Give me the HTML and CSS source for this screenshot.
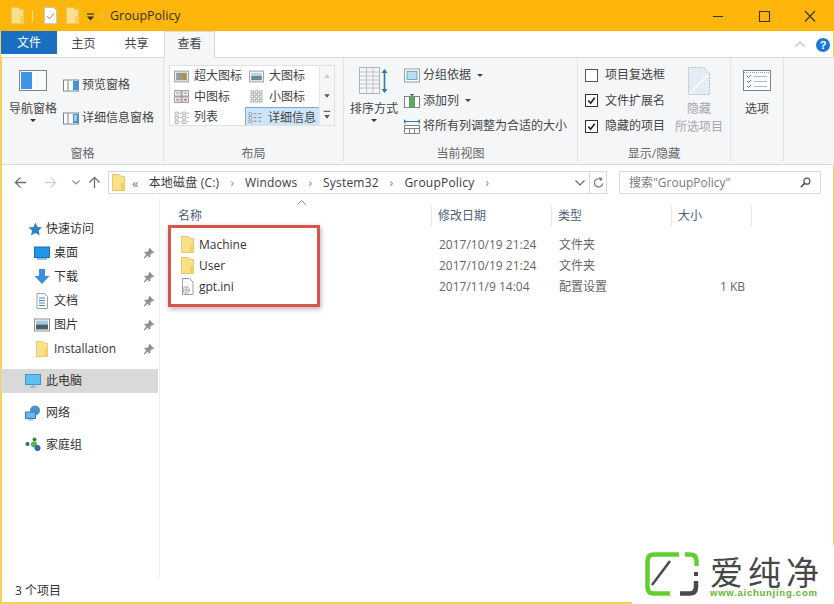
FILE: index.html
```html
<!DOCTYPE html>
<html lang="zh-CN">
<head>
<meta charset="utf-8">
<title>GroupPolicy</title>
<link rel="stylesheet" href="styles.css">
</head>
<body>
<svg class="defs" width="0" height="0">
  <symbol id="folder" viewBox="0 0 13 17">
    <path d="M.5 .5h7l1.500 2h3.500v14h-12z" fill="#fbe08a" stroke="#e8c766"/>
    <path d="M9 9h3.500v7.500H9z" fill="#f6cf60"/>
  </symbol>
  <symbol id="pin" viewBox="0 0 12 12">
    <path d="M6.500 .8l4.700 4.700-1 .8-1-.4-2 2 .2 2-.9.900-2-2L1.500 11.200l-.7-.7 2.400-3-2-2 .9-.9 2 .2 2-2-.4-1z" fill="#8d9298"/>
  </symbol>
</svg>
<div class="window">
  <header class="titlebar">
    <svg class="qa-folder"><use href="#folder"/></svg>
    <span class="qa-sep"></span>
    <svg class="qa-doc" viewBox="0 0 13 17"><path d="M.5 .5h9l3 3v13H.5z" fill="#fff" stroke="#c8c8c8"/><path d="M3 9l2.500 3L10 6" fill="none" stroke="#e0805a" stroke-width="1"/></svg>
    <svg class="qa-folder2"><use href="#folder"/></svg>
    <svg class="qa-drop" viewBox="0 0 9 8"><path d="M1 1h7" stroke="#333" stroke-width="1.200"/><path d="M1 3.500h7L4.500 7.500z" fill="#333"/></svg>
    <span class="qa-sep2"></span>
    <span class="title-text">GroupPolicy</span>
    <div class="winctl">
      <svg viewBox="0 0 46 16"><path d="M18 8.500h10" stroke="#333" stroke-width="1"/></svg>
      <svg viewBox="0 0 46 16"><path d="M18.500 3.500h10v10h-10z" fill="none" stroke="#333" stroke-width="1.100"/></svg>
      <svg viewBox="0 0 46 16"><path d="M18 3l10 10.500M28 3L18 13.500" fill="none" stroke="#333" stroke-width="1.100"/></svg>
    </div>
  </header>

  <nav class="tabs">
    <span class="tab tab-file">文件</span>
    <span class="tab">主页</span>
    <span class="tab">共享</span>
    <span class="tab tab-active">查看</span>
    <span class="tabs-fill"></span>
    <svg class="collapse" viewBox="0 0 10 6"><path d="M.5 5.500L5 1l4.500 4.500" fill="none" stroke="#b5b8bc" stroke-width="1.100"/></svg>
    <span class="help">?</span>
  </nav>

  <section class="ribbon">
    <div class="group g-pane">
      <div class="gbody">
        <div class="big big-nav">
          <svg class="bi-nav" viewBox="0 0 28 21"><rect x=".5" y=".5" width="27" height="20" fill="#fafbfc" stroke="#7f8388"/><rect x="2" y="2" width="11" height="17" fill="#3d96e3"/></svg>
          <span class="big-label">导航窗格</span>
          <i class="caret"></i>
        </div>
        <div class="pane-col">
          <div class="small"><svg class="si" viewBox="0 0 16 12"><rect x=".5" y=".5" width="15" height="11" fill="#fff" stroke="#7f8388"/><path d="M5 1v10" stroke="#7f8388"/><rect x="10" y="1.500" width="5" height="9" fill="#3d96e3"/></svg><span>预览窗格</span></div>
          <div class="small"><svg class="si" viewBox="0 0 16 12"><rect x=".5" y=".5" width="15" height="11" fill="#fff" stroke="#7f8388"/><path d="M5 1v10" stroke="#7f8388"/><rect x="10" y="1.500" width="5" height="9" fill="#3d96e3"/><path d="M11 3.500h3M11 5.500h3M11 7.500h3" stroke="#fff"/></svg><span>详细信息窗格</span></div>
        </div>
      </div>
      <div class="glabel">窗格</div>
    </div>

    <div class="group g-layout">
      <div class="gbody">
        <div class="gallery">
          <div class="gallery-grid">
            <div class="gi"><svg class="gico" viewBox="0 0 14 11"><rect x=".5" y=".5" width="13" height="10" fill="#eef1f4" stroke="#a0a4a8"/><rect x="2" y="2" width="10" height="7" fill="#8aa098"/><rect x="7" y="3" width="4" height="5" fill="#c9853c"/></svg><span>超大图标</span></div>
            <div class="gi"><svg class="gico" viewBox="0 0 14 11"><rect x=".5" y=".5" width="13" height="10" fill="#fff" stroke="#a0a4a8"/><path d="M2 2h10v3H2z" fill="#b5d6e3"/><path d="M2 5h10v4H2z" fill="#6d8793"/></svg><span>大图标</span></div>
            <div class="gi"><svg class="gico" viewBox="0 0 14 12"><path d="M.5 .5h6v5h-6zM7.500 .5h6v5h-6zM.5 6.500h6v5h-6zM7.500 6.500h6v5h-6z" fill="#f8f8f8" stroke="#a0a4a8"/><path d="M2 8h3v2H2z" fill="#d4976a"/><path d="M9 8h3v2H9z" fill="#d4786a"/><path d="M2 2h3v2H2zM9 2h3v2H9z" fill="#b5bac0"/></svg><span>中图标</span></div>
            <div class="gi"><svg class="gico" viewBox="0 0 14 14"><path d="M1 1h3v3H1zM5.500 1h3v3h-3zM10 1h3v3h-3zM1 5.500h3v3H1zM5.500 5.500h3v3h-3zM10 5.500h3v3h-3zM1 10h3v3H1zM5.500 10h3v3h-3zM10 10h3v3h-3z" fill="#fff" stroke="#8a8e92" stroke-width=".8"/></svg><span>小图标</span></div>
            <div class="gi"><svg class="gico" viewBox="0 0 14 12"><path d="M1 1h3v2.500H1zM1 5h3v2.500H1zM1 9h3v2.500H1zM8 1h3v2.500H8zM8 5h3v2.500H8zM8 9h3v2.500H8z" fill="#fff" stroke="#a0a4a8" stroke-width=".8"/><path d="M5 2h2M5 6h2M5 10h2M12 2h2M12 6h2M12 10h2" stroke="#b0b4b8"/></svg><span>列表</span></div>
            <div class="gi gi-sel"><svg class="gico" viewBox="0 0 16 12"><path d="M1 1h3v2.500H1zM1 5h3v2.500H1zM1 9h3v2.500H1z" fill="#fff" stroke="#7d8893" stroke-width=".8"/><path d="M6 2h3M6 6h3M6 10h3M11 2h3M11 6h3M11 10h3" stroke="#7d8893"/></svg><span>详细信息</span></div>
          </div>
          <div class="gallery-scroll">
            <svg viewBox="0 0 15 20"><path d="M4.500 12L7.500 8l3 4z" fill="#c5c8cc"/></svg>
            <svg viewBox="0 0 15 20"><path d="M4.500 8l3 4 3-4z" fill="#555"/></svg>
            <svg viewBox="0 0 15 20"><path d="M4 5h7" stroke="#555" stroke-width="1.200"/><path d="M4.500 9l3 4 3-4z" fill="#555"/></svg>
          </div>
        </div>
      </div>
      <div class="glabel">布局</div>
    </div>

    <div class="group g-view">
      <div class="gbody">
        <div class="big big-sort">
          <svg class="bi-sort" viewBox="0 0 30 28"><rect x=".5" y=".5" width="20" height="26" fill="#f3f5f7" stroke="#aeb3b8"/><path d="M1 5h19M1 9h19M1 13h19M1 17h19M1 21h19M7.500 1v25M14 1v25" stroke="#bcc1c6"/><path d="M25.500 3v22" stroke="#2d7db3" stroke-width="1.600"/><path d="M22.500 6l3-4 3 4zM22.500 22l3 4 3-4z" fill="#2d7db3"/></svg>
          <span class="big-label">排序方式</span>
          <i class="caret"></i>
        </div>
        <div class="view-col">
          <div class="small"><svg class="si" viewBox="0 0 16 14"><rect x=".5" y=".5" width="15" height="13" fill="#f8fafc" stroke="#9aa0a6"/><rect x="3" y="3" width="10" height="8" fill="#b8dcf5" stroke="#6fa8d0"/></svg><span>分组依据</span><i class="mini-caret"></i></div>
          <div class="small"><svg class="si" viewBox="0 0 16 15"><rect x=".5" y="3.500" width="15" height="11" fill="#fff" stroke="#7f8388"/><path d="M5.500 4v10M10.500 4v10" stroke="#7f8388"/><rect x="6" y="4" width="4" height="10" fill="#4cb848"/><path d="M5.500 1h5L8 3.500z" fill="#2d7db3"/></svg><span>添加列</span><i class="mini-caret"></i></div>
          <div class="small"><svg class="si" viewBox="0 0 16 15"><path d="M.5 .5v4M15.500 .5v4M2 2.500h12" stroke="#2d7db3" fill="none"/><path d="M2 .8v3.400L.8 2.500zM14 .8v3.400l1.200-1.700z" fill="#2d7db3"/><path d="M.5 6.500h15v8H.5zM.5 9.500h15M5.500 9.500v5M10.500 9.500v5" fill="#fff" stroke="#7f8388"/></svg><span>将所有列调整为合适的大小</span></div>
        </div>
      </div>
      <div class="glabel">当前视图</div>
    </div>

    <div class="group g-show">
      <div class="gbody">
        <div class="checks">
          <label class="chk"><i class="box"></i><span>项目复选框</span></label>
          <label class="chk"><i class="box on"><svg viewBox="0 0 12 12"><path d="M2.500 6l2.500 3 4.500-6" fill="none" stroke="#222" stroke-width="1.800"/></svg></i><span>文件扩展名</span></label>
          <label class="chk"><i class="box on"><svg viewBox="0 0 12 12"><path d="M2.500 6l2.500 3 4.500-6" fill="none" stroke="#222" stroke-width="1.800"/></svg></i><span>隐藏的项目</span></label>
        </div>
        <div class="big big-hide">
          <svg class="bi-hide" viewBox="0 0 22 28"><path d="M.5 .5h15l6 6v21H.5z" fill="#e4edf6"/><path d="M.5 27.500V.5h15l6 6v21h-21" fill="none" stroke="#b7c0ca" stroke-dasharray="2 1"/><path d="M1 27L21 7" stroke="#fff" stroke-width="1.500"/></svg>
          <span class="hide-l1">隐藏</span>
          <span class="hide-l2">所选项目</span>
        </div>
      </div>
      <div class="glabel">显示/隐藏</div>
    </div>

    <div class="group g-opt">
      <div class="gbody">
        <div class="big big-opt">
          <svg class="bi-opt" viewBox="0 0 28 21"><rect x=".5" y=".5" width="27" height="20" fill="#fbfcfd" stroke="#7f8388"/><path d="M1 2.500h26" stroke="#9aa0a6" stroke-dasharray="1 1"/><path d="M4 6l1.500 1.500L8 5M4 11l1.500 1.500L8 10M4 16l1.500 1.500L8 15" fill="none" stroke="#3f7fb5"/><path d="M11 6.500h13M11 11.500h13M11 16.500h13" stroke="#b5babf"/></svg>
          <span class="big-label">选项</span>
        </div>
      </div>
      <div class="glabel">&nbsp;</div>
    </div>
  </section>

  <div class="addressrow">
    <svg class="nav-ico back" viewBox="0 0 14 14"><path d="M13 7H2M7 1.500L1.500 7 7 12.500" fill="none" stroke="#6b6f73" stroke-width="1.400"/></svg>
    <svg class="nav-ico fwd" viewBox="0 0 14 14"><path d="M1 7h11M7 1.500L12.500 7 7 12.500" fill="none" stroke="#d0d2d4" stroke-width="1.400"/></svg>
    <svg class="nav-ico down" viewBox="0 0 8 5"><path d="M.5 .5L4 4 7.500 .5" fill="none" stroke="#8a8d90" stroke-width="1.100"/></svg>
    <svg class="nav-ico up" viewBox="0 0 14 14"><path d="M7 13V2M1.500 7L7 1.500 12.500 7" fill="none" stroke="#6b6f73" stroke-width="1.400"/></svg>
    <div class="address">
      <svg class="addr-folder"><use href="#folder"/></svg>
      <span class="crumb crumb-more">«</span>
      <span class="crumb">本地磁盘 (C:)</span><span class="sep">›</span>
      <span class="crumb">Windows</span><span class="sep">›</span>
      <span class="crumb">System32</span><span class="sep">›</span>
      <span class="crumb">GroupPolicy</span><span class="sep">›</span>
      <span class="addr-fill"></span>
      <svg class="addr-chev" viewBox="0 0 10 6"><path d="M.5 .5L5 5 9.500 .5" fill="none" stroke="#666" stroke-width="1.200"/></svg>
      <span class="addr-refresh"><svg viewBox="0 0 12 13"><path d="M9.500 4A4.500 4.500 0 1 0 10.500 7.500" fill="none" stroke="#777" stroke-width="1.300"/><path d="M6.500 .5l4 1.500-2.500 3z" fill="#777"/></svg></span>
    </div>
    <div class="search">
      <span>搜索"GroupPolicy"</span>
      <svg viewBox="0 0 12 12"><circle cx="7.500" cy="4.500" r="3.300" fill="none" stroke="#555" stroke-width="1.300"/><path d="M5 7L1 11" stroke="#555" stroke-width="1.800"/></svg>
    </div>
  </div>

  <main class="content">
    <aside class="sidebar">
      <div class="side-item si-head"><svg class="sico" viewBox="0 0 16 16"><path d="M8.500 1.500l2 4.500 4.500.5-3.300 3 1 5-4.200-2.500L4 14.500l1-5-3.500-3L6.500 6z" fill="#2e82c9"/></svg><span>快速访问</span></div>
      <div class="side-item sub"><svg class="sico" viewBox="0 0 16 13"><rect x=".5" y=".5" width="15" height="10.500" fill="#2196e8" stroke="#1a6eb5"/><path d="M3 12.500h10" stroke="#3a7cb5"/></svg><span>桌面</span><svg class="pin"><use href="#pin"/></svg></div>
      <div class="side-item sub"><svg class="sico" viewBox="0 0 16 16"><path d="M5 0h6v7h4.500L8 15 .5 7H5z" fill="#3a8de0"/></svg><span>下载</span><svg class="pin"><use href="#pin"/></svg></div>
      <div class="side-item sub"><svg class="sico" viewBox="0 0 16 16"><path d="M3 .5h7.500l3 3v12H3z" fill="#fff" stroke="#9aa0a6"/><path d="M5 5h6M5 7.500h6M5 10h6M5 12.500h6" stroke="#3f8fb5"/></svg><span>文档</span><svg class="pin"><use href="#pin"/></svg></div>
      <div class="side-item sub"><svg class="sico" viewBox="0 0 16 13"><rect x=".5" y=".5" width="15" height="12" fill="#fff" stroke="#8a8e92"/><path d="M2 2h12v4H2z" fill="#a5c9da"/><path d="M2 6h12v5H2z" fill="#48606c"/></svg><span>图片</span><svg class="pin"><use href="#pin"/></svg></div>
      <div class="side-item sub"><svg class="sico" viewBox="0 0 13 17"><use href="#folder"/></svg><span>Installation</span><svg class="pin"><use href="#pin"/></svg></div>
      <div class="side-item head-gap selected"><svg class="sico" viewBox="0 0 16 14"><rect x=".5" y=".5" width="15" height="10" fill="#5cc0f5" stroke="#4a8fbf"/><path d="M5 13h6M8 11v2" stroke="#7ba3bf"/></svg><span>此电脑</span></div>
      <div class="side-item head-gap"><svg class="sico" viewBox="0 0 16 16"><circle cx="10" cy="5.500" r="5" fill="#4a92c8"/><rect x=".5" y="7" width="10" height="6.500" fill="#6db6ea" stroke="#3a7cb5"/><path d="M3 15h5" stroke="#7ba3bf"/></svg><span>网络</span></div>
      <div class="side-item head-gap"><svg class="sico" viewBox="0 0 16 16"><circle cx="2.500" cy="7" r="2" fill="#35619e"/><circle cx="9.500" cy="2.500" r="2" fill="#3f7c3a"/><circle cx="9" cy="7.500" r="3" fill="#4cb848"/><circle cx="12.500" cy="11" r="3" fill="#2f6aa8"/></svg><span>家庭组</span></div>
    </aside>
    <section class="files">
      <svg class="sort-caret" viewBox="0 0 9 5"><path d="M.5 4.500L4.500 .5l4 4" fill="none" stroke="#8a8d90"/></svg>
      <div class="fhead">
        <span class="c-name">名称</span>
        <span class="c-date">修改日期</span>
        <span class="c-type">类型</span>
        <span class="c-size">大小</span>
      </div>
      <div class="frow"><span class="c-name fn"><svg class="fi"><use href="#folder"/></svg>Machine</span><span class="c-date">2017/10/19 21:24</span><span class="c-type">文件夹</span><span class="c-size"></span></div>
      <div class="frow"><span class="c-name fn"><svg class="fi"><use href="#folder"/></svg>User</span><span class="c-date">2017/10/19 21:24</span><span class="c-type">文件夹</span><span class="c-size"></span></div>
      <div class="frow"><span class="c-name fn"><svg class="fi" viewBox="0 0 13 17"><path d="M1.500 .5h7l3.500 3.500v12.500H1.500z" fill="#fff" stroke="#9a9ea2"/><circle cx="5" cy="12" r="3.200" fill="#e8e8e8" stroke="#77797c" stroke-dasharray="1.500 .8"/><circle cx="5" cy="12" r="1" fill="#fff" stroke="#77797c" stroke-width=".6"/></svg>gpt.ini</span><span class="c-date">2017/11/9 14:04</span><span class="c-type">配置设置</span><span class="c-size">1 KB</span></div>
      <div class="highlight"></div>
    </section>
  </main>
  <footer class="status">3 个项目</footer>

  <div class="watermark">
    <svg class="wm-logo" viewBox="0 0 54 44">
      <path d="M34 2.500H9Q2.500 2.500 2.500 9v26q0 6.500 6.500 6.500h16" fill="none" stroke="#62cf2e" stroke-width="4.500"/>
      <path d="M40 2.500h5q6.500 0 6.500 6.500v5" fill="none" stroke="#62cf2e" stroke-width="4.500"/>
      <path d="M7 33L25 9" stroke="#4a4a4a" stroke-width="2.500"/>
      <path d="M51 20v4" stroke="#4a4a4a" stroke-width="4"/>
      <path d="M51 29v6q0 6.500-6.500 6.500H35" fill="none" stroke="#4a4a4a" stroke-width="4.500"/>
    </svg>
    <div class="wm-text">
      <span class="wm-cn">爱纯净</span>
      <span class="wm-url">www.aichunjing.com</span>
    </div>
  </div>
</div>
</body>
</html>
```

FILE: styles.css
```css
* { box-sizing: border-box; }
html, body { margin: 0; padding: 0; }
body {
  width: 834px; height: 604px; overflow: hidden; background: #fff;
  font: 12px/16px "Open Sans", "Noto Sans CJK SC", sans-serif;
  color: #3c3c3c;
}
.defs { position: absolute; }
svg { display: block; flex: none; }
.window {
  position: relative; width: 834px; height: 604px; display: flex; flex-direction: column;
  border: solid #f6d155; border-width: 0 1px 2px 2px; background: #fff;
}

/* title bar */
.titlebar {
  height: 31px; margin: 0 -1px 0 -2px; padding-left: 11px; background: #ffb60b;
  display: flex; align-items: center; flex: none;
}
.qa-folder, .qa-folder2 { width: 13px; height: 17px; }
.qa-sep { width: 1px; height: 12px; background: #e8d9a5; margin: 0 11px 0 8px; }
.qa-doc { width: 13px; height: 17px; margin-right: 9px; }
.qa-drop { width: 9px; height: 8px; margin: 2px 0 0 7px; }
.qa-sep2 { width: 1px; height: 12px; background: #d9c586; margin: 0 7px 0 7px; }
.title-text { font-size: 12.500px; color: #333; }
.winctl { margin-left: auto; display: flex; padding-right: 1px; }
.winctl svg { width: 46px; height: 16px; }

/* tabs */
.tabs {
  height: 26px; flex: none; display: flex; align-items: flex-start; background: #fff;
  margin-left: -1px; padding-right: 3px;
}
.tab { width: 53px; height: 23px; line-height: 25px; text-align: center; color: #444; }
.tab-file { width: 56px; background: #1a6fc2; color: #fff; line-height: 24px; }
.tab-active { width: 51px; height: 27px; margin-left: 1px; border: 1px solid #dadbdc; border-bottom: 0; background: #f5f6f7; line-height: 24px; position: relative; z-index: 1; }
.tabs-fill { flex: 1; }
.collapse { width: 10px; height: 6px; margin: 10px 11px 0 0; }
.help {
  width: 14px; height: 14px; margin-top: 7px; border-radius: 50%; background: #1b78d0; color: #fff;
  font: bold 11px/14px "Liberation Sans", sans-serif; text-align: center;
}

/* ribbon */
.ribbon {
  height: 108px; flex: none; display: flex; background: #f5f6f8;
  border-top: 1px solid #dadbdc; border-bottom: 1px solid #dadbdc; margin-right: -1px;
}
.group { display: flex; flex-direction: column; border-right: 1px solid #e2e3e5; margin-bottom: 3px; color: #444; }
.gbody { flex: 1; display: flex; min-height: 0; }
.glabel { height: 18px; text-align: center; color: #666; line-height: 18px; padding-top: 2px; }
.g-pane { width: 162px; }
.g-layout { width: 180px; }
.g-view { width: 234px; }
.g-show { width: 153px; }
.g-opt { width: 53px; }

.big { display: flex; flex-direction: column; align-items: center; }
.big-label { margin-top: 10px; white-space: nowrap; }
.caret { width: 0; height: 0; border: 3px solid transparent; border-top-color: #333; border-bottom: 0; margin-top: 2px; }
.mini-caret { width: 0; height: 0; border: 3px solid transparent; border-top-color: #444; border-bottom: 0; margin-left: 6px; }
.big-nav { width: 48px; margin: 12px 0 0 7px; }
.bi-nav { width: 28px; height: 21px; }
.pane-col { margin: 19px 0 0 6px; display: flex; flex-direction: column; gap: 17px; }
.small { display: flex; align-items: center; height: 16px; white-space: nowrap; }
.si { width: 16px; height: 13px; margin-right: 3px; }

.gallery { margin: 7px 0 0 5px; width: 166px; height: 61px; display: flex; background: #fff; border: 1px solid #dfe1e4; }
.gallery-grid { flex: 1; display: grid; grid-template-columns: 75px 75px; grid-template-rows: 20px 21px 20px; overflow: hidden; }
.gi { display: flex; align-items: center; white-space: nowrap; padding-left: 4px; }
.gi span { margin-left: 5px; }
.gico { width: 15px; height: 13px; }
.gi-sel { background: #cde5f8; border: 1px solid #82a9d2; border-bottom: 0; padding-left: 2px; }
.gallery-scroll { width: 15px; background: #f5f6f8; border-left: 1px solid #e5e6e8; display: flex; flex-direction: column; }
.gallery-scroll svg { width: 14px; height: 20px; }

.big-sort { width: 48px; margin: 9px 0 0 6px; }
.bi-sort { width: 30px; height: 28px; }
.big-sort .big-label { margin-top: 6px; }
.view-col { margin: 9px 0 0 6px; display: flex; flex-direction: column; gap: 9.500px; }
.view-col .si { height: 15px; }
.checks { margin: 9px 0 0 7px; display: flex; flex-direction: column; gap: 9.500px; }
.chk { display: flex; align-items: center; height: 16px; white-space: nowrap; }
.box { width: 13px; height: 13px; border: 1px solid #555; background: #fff; margin-right: 7px; flex: none; }
.box svg { width: 11px; height: 11px; }
.box.on { border-color: #333; }
.big-hide { width: 48px; margin: 9px 0 0 10px; color: #a4a7ab; }
.bi-hide { width: 22px; height: 28px; }
.hide-l1 { margin-top: 6px; }
.hide-l2 { margin-top: 2px; white-space: nowrap; }
.big-opt { width: 52px; margin-top: 12px; }
.bi-opt { width: 28px; height: 21px; }

/* address row */
.addressrow { height: 33px; flex: none; display: flex; align-items: center; margin-top: 1px; }
.nav-ico { width: 13px; height: 13px; }
.back { margin-left: 12px; }
.fwd { margin-left: 17px; }
.down { width: 8px; height: 5px; margin-left: 15px; }
.up { margin-left: 8px; }
.address {
  margin-left: 7px; width: 499px; height: 23px; border: 1px solid #d9d9d9; display: flex; align-items: center;
  color: #3c3c3c;
}
.addr-folder { width: 13px; height: 17px; margin-left: 3px; }
.crumb { white-space: nowrap; letter-spacing: .2px; }
.crumb-more { margin: 0 10px 0 7px; color: #777; font-size: 13px; }
.sep { margin: 0 11px; color: #888; }
.addr-fill { flex: 1; }
.addr-chev { width: 10px; height: 6px; margin-right: 4px; }
.addr-refresh { width: 17px; height: 21px; border-left: 1px solid #d9d9d9; display: flex; align-items: center; justify-content: center; }
.addr-refresh svg { width: 11px; height: 13px; }
.search {
  margin-left: 12px; width: 202px; height: 23px; border: 1px solid #d9d9d9; display: flex; align-items: center;
  justify-content: space-between; padding: 0 9px; color: #7a7a7a;
}
.search svg { width: 11px; height: 11px; }

/* main */
.content { flex: 1; display: flex; min-height: 0; }
.sidebar { width: 159px; flex: none; border-right: 1px solid #f0f0f0; padding-top: 18px; margin-left: -1px; }
.side-item { height: 24px; display: flex; align-items: center; position: relative; white-space: nowrap; color: #333; }
.sico { width: 16px; height: 16px; margin-right: 4px; }
.si-head { padding-left: 26px; }
.si-head .sico { margin-right: 3px; }
.sub { padding-left: 33px; }
.head-gap { margin-top: 8px; padding-left: 24px; }
.head-gap .sico { margin-right: 5px; }
.selected { background: #d9d9d9; margin-right: 1px; }
.pin { width: 12px; height: 12px; margin-left: auto; margin-right: 4px; }
.files { flex: 1; position: relative; }
.sort-caret { position: absolute; left: 137px; top: 1px; width: 9px; height: 5px; }
.fhead, .frow { display: grid; grid-template-columns: 272px 120px 120px 80px; }
.fhead { height: 21px; margin-top: 6px; color: #4e6079; line-height: 21px; }
.fhead span { border-right: 1px solid #e6e6e6; padding-left: 6px; }
.fhead .c-name { padding-left: 18px; }
.frow { height: 21px; line-height: 21px; color: #666; }
.fhead + .frow { margin-top: 8px; }
.frow .c-date, .frow .c-type { padding-left: 7px; }
.frow .c-size { text-align: right; padding-right: 7px; }
.fn { display: flex; align-items: center; padding-left: 21px; color: #333; }
.fi { width: 13px; height: 17px; margin-right: 5px; }
.highlight {
  position: absolute; left: 8px; top: 26px; width: 152px; height: 82px; border: 3px solid #d9534f;
  box-shadow: 1px 2px 5px rgba(0,0,0,.3);
}

.status { height: 23px; flex: none; padding-left: 13px; line-height: 23px; color: #333; }

/* watermark */
.watermark {
  position: absolute; right: -1px; bottom: -2px; width: 202px; height: 59px; background: #fff;
  display: flex; padding: 7px 0 0 13px;
}
.wm-logo { width: 54px; height: 44px; }
.wm-text { margin: 1px 0 0 11px; display: flex; flex-direction: column; }
.wm-cn { font: 33px/36px "Noto Sans CJK SC", sans-serif; color: #474747; letter-spacing: 5px; white-space: nowrap; }
.wm-url { font: bold 9.500px/8px "Liberation Sans", sans-serif; color: #5fb62f; letter-spacing: .75px; white-space: nowrap; }
```
